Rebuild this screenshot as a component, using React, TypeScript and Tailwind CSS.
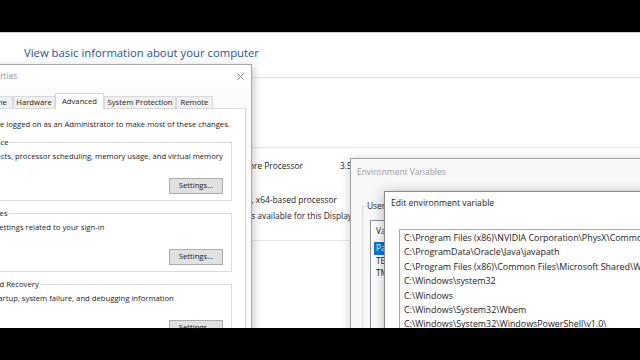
import React from "react";

function CloseX() {
  return (
    <svg width="7" height="7" viewBox="0 0 7 7" className="block">
      <path d="M0.3 0.3 L6.7 6.7 M6.7 0.3 L0.3 6.7" stroke="#7a7a7a" strokeWidth="0.9" fill="none" />
    </svg>
  );
}

function BackgroundPage() {
  return (
    <div className="flex flex-col text-[8.4px] leading-[12px] text-[#1b1b1b]">
      <div className="h-px bg-[#cfcfcf]" />
      <div className="mt-[11.5px] pl-[24px] text-[11.3px] leading-[15px] text-[#22539c] whitespace-nowrap">
        View basic information about your computer
      </div>
      <div className="mt-[17.5px] h-px bg-[#e3e3e3]" />
      <div className="mt-[69px] h-px bg-[#e6e6e6]" />
      <div className="mt-[12px] flex whitespace-nowrap">
        <span className="w-[303px] shrink-0 text-right">AMD FX(tm)-6300 Six-Core Processor</span>
        <span className="ml-[37px]">3.50 GHz</span>
      </div>
      <div className="mt-[22px] flex whitespace-nowrap">
        <span className="w-[337px] shrink-0 text-right">64-bit Operating System, x64-based processor</span>
      </div>
      <div className="mt-[4px] flex whitespace-nowrap">
        <span className="w-[352px] shrink-0 text-right">No Pen or Touch Input is available for this Display</span>
      </div>
      <div className="mt-[18px] h-px w-[380px] bg-[#e6e6e6]" />
    </div>
  );
}

function GroupBox({ label, text }: { label: string; text: string }) {
  return (
    <div className="relative ml-[14px] mr-[13px] h-[59px] border border-[#dcdcdc]">
      <span className="absolute left-[6px] top-[-7px] bg-white px-[1px] leading-[12px] whitespace-nowrap">
        {label}
      </span>
      <div className="pt-[8px] pl-[9px] leading-[11px] whitespace-nowrap">{text}</div>
      <div className="mt-[15.5px] flex justify-end pr-[8px]">
        <div className="flex h-[16px] w-[54px] items-center justify-center border border-[#adadad] bg-[#e1e1e1] leading-none">
          Settings...
        </div>
      </div>
    </div>
  );
}

function SystemProperties() {
  const tabs = [
    { name: "Computer Name", w: "w-[72px]" },
    { name: "Hardware", w: "w-[42px]" },
    { name: "Advanced", w: "w-[49px]", sel: true },
    { name: "System Protection", w: "w-[72px]" },
    { name: "Remote", w: "w-[37px]" },
  ];
  return (
    <div className="absolute left-[-66px] top-[32px] w-[318px] h-[290px] border border-[#a8a8a8] bg-[#fbfbfb] shadow-[2px_2px_8px_rgba(0,0,0,0.22)] text-[7.7px] text-[#1b1b1b]">
      <div className="flex h-[22px] items-center justify-between bg-white pl-[12px] pr-[7.5px]">
        <span className="text-[8.3px] text-[#8f8f8f] whitespace-nowrap">System Properties</span>
        <CloseX />
      </div>
      <div className="relative z-10 mt-[6px] ml-[6px] flex h-[15px] items-end">
        {tabs.map((t) =>
          t.sel ? (
            <div
              key={t.name}
              className={`${t.w} -mb-px flex h-[16px] items-center justify-center border border-b-0 border-[#d9d9d9] bg-white leading-none whitespace-nowrap`}
            >
              {t.name}
            </div>
          ) : (
            <div
              key={t.name}
              className={`${t.w} flex h-[12px] items-center justify-center border-t border-l border-r border-[#d9d9d9] bg-[#f0f0f0] leading-none whitespace-nowrap`}
            >
              {t.name}
            </div>
          )
        )}
      </div>
      <div className="ml-[4px] mr-[5px] h-[240px] border border-[#d9d9d9] bg-white pt-[10px]">
        <div className="ml-[19.4px] leading-[11px] whitespace-nowrap">
          You must be logged on as an Administrator to make most of these changes.
        </div>
        <div className="mt-[12px]">
          <GroupBox label="Performance" text="Visual effects, processor scheduling, memory usage, and virtual memory" />
        </div>
        <div className="mt-[12px]">
          <GroupBox label="User Profiles" text="Desktop settings related to your sign-in" />
        </div>
        <div className="mt-[12px]">
          <GroupBox label="Startup and Recovery" text="System startup, system failure, and debugging information" />
        </div>
      </div>
    </div>
  );
}

function EnvVars() {
  return (
    <div className="absolute left-[350px] top-[126px] w-[320px] h-[220px] border border-[#a3a3a3] bg-[#f8f8f8] shadow-[0_2px_10px_rgba(0,0,0,0.2)] text-[8.4px] text-[#1b1b1b]">
      <div className="h-[28px] pl-[6px] pt-[7px] leading-[12px] text-[8.43px] text-[#9a9a9a] whitespace-nowrap">
        Environment Variables
      </div>
      <div className="relative mt-[19px] ml-[11px] h-[180px] w-[290px] border border-[#dcdcdc]">
        <span className="absolute left-[3px] top-[-7px] bg-[#f8f8f8] px-[1px] leading-[12px] whitespace-nowrap">
          User variables for Admin
        </span>
        <div className="mt-[13px] ml-[7px] h-[140px] w-[270px] border border-[#8a8f96] bg-white">
          <div className="flex h-[21px] items-center pl-[5px] whitespace-nowrap">Variable</div>
          <div className="ml-[3px] h-[12.5px] w-[60px] bg-[#0078d7] pl-[2px] leading-[12.5px] text-white">Path</div>
          <div className="h-[12.5px] pl-[5px] leading-[12.5px]">TEMP</div>
          <div className="h-[12.5px] pl-[5px] leading-[12.5px]">TMP</div>
        </div>
      </div>
    </div>
  );
}

function EditEnv() {
  const rows = [
    "C:\\Program Files (x86)\\NVIDIA Corporation\\PhysX\\Common",
    "C:\\ProgramData\\Oracle\\Java\\javapath",
    "C:\\Program Files (x86)\\Common Files\\Microsoft Shared\\Windows Live",
    "C:\\Windows\\system32",
    "C:\\Windows",
    "C:\\Windows\\System32\\Wbem",
    "C:\\Windows\\System32\\WindowsPowerShell\\v1.0\\",
    "C:\\Program Files\\Git\\cmd",
  ];
  return (
    <div className="absolute left-[384px] top-[159px] w-[300px] h-[200px] border border-[#8a8a8a] bg-white shadow-[0_2px_12px_rgba(0,0,0,0.3)] text-[#1b1b1b]">
      <div className="pl-[6px] pt-[5px] leading-[12px] text-[8.6px] whitespace-nowrap">Edit environment variable</div>
      <div className="mt-[20px] ml-[13.5px] h-[150px] w-[290px] overflow-hidden border border-[#a9a9a9] pt-[1px]">
        {rows.map((r) => (
          <div key={r} className="h-[14.4px] pl-[4.5px] text-[8.9px] leading-[14.4px] whitespace-nowrap">
            {r}
          </div>
        ))}
      </div>
    </div>
  );
}

export default function App() {
  return (
    <div className="flex h-[360px] w-[640px] flex-col overflow-hidden bg-black font-['Open_Sans',sans-serif]">
      <div className="h-[32px] shrink-0 bg-black" />
      <div className="relative h-[296px] shrink-0 overflow-hidden bg-white">
        <BackgroundPage />
        <SystemProperties />
        <EnvVars />
        <EditEnv />
      </div>
      <div className="h-[32px] shrink-0 bg-black" />
    </div>
  );
}
